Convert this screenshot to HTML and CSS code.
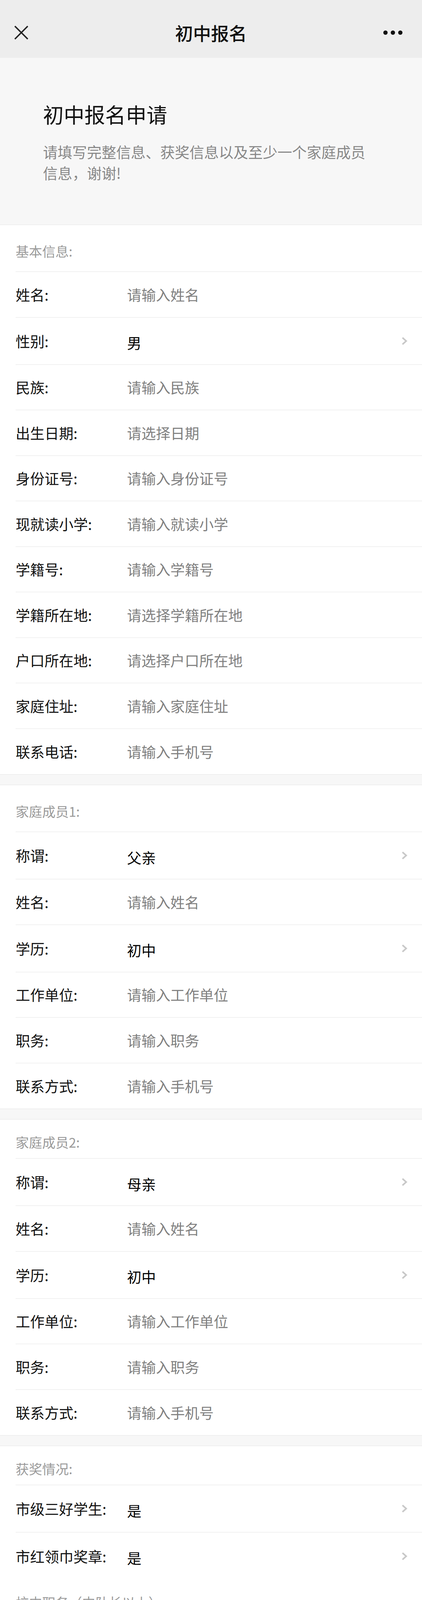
FILE: index.html
```html
<!DOCTYPE html>
<html lang="zh-CN">
<head>
<meta charset="utf-8">
<title>初中报名</title>
<link rel="stylesheet" href="styles.css">
</head>
<body>
<div class="page">
  <header class="nav">
    <span class="nav-close">
      <svg width="37" height="37" viewBox="0 0 37 37"><path d="M2 2L35 35M35 2L2 35" stroke="#222" stroke-width="3.6" fill="none"/></svg>
    </span>
    <h1 class="nav-title">初中报名</h1>
    <span class="nav-more"><i></i><i></i><i></i></span>
  </header>

  <section class="intro">
    <h2 class="intro-title">初中报名申请</h2>
    <p class="intro-desc">请填写完整信息、获奖信息以及至少一个家庭成员信息，谢谢!</p>
  </section>

  <section class="group">
    <div class="group-title first">基本信息:</div>
    <div class="cell"><span class="cell-label">姓名:</span><span class="cell-value ph">请输入姓名</span></div>
    <div class="cell pick"><span class="cell-label">性别:</span><span class="cell-value">男</span><svg class="chev" width="16" height="22" viewBox="0 0 16 22"><path d="M3 2.5L12.5 11L3 19.5" stroke="#c8c8c8" stroke-width="4" fill="none"/></svg></div>
    <div class="cell"><span class="cell-label">民族:</span><span class="cell-value ph">请输入民族</span></div>
    <div class="cell"><span class="cell-label">出生日期:</span><span class="cell-value ph">请选择日期</span></div>
    <div class="cell"><span class="cell-label">身份证号:</span><span class="cell-value ph">请输入身份证号</span></div>
    <div class="cell"><span class="cell-label">现就读小学:</span><span class="cell-value ph">请输入就读小学</span></div>
    <div class="cell"><span class="cell-label">学籍号:</span><span class="cell-value ph">请输入学籍号</span></div>
    <div class="cell"><span class="cell-label">学籍所在地:</span><span class="cell-value ph">请选择学籍所在地</span></div>
    <div class="cell"><span class="cell-label">户口所在地:</span><span class="cell-value ph">请选择户口所在地</span></div>
    <div class="cell"><span class="cell-label">家庭住址:</span><span class="cell-value ph">请输入家庭住址</span></div>
    <div class="cell last"><span class="cell-label">联系电话:</span><span class="cell-value ph">请输入手机号</span></div>
  </section>

  <div class="band"></div>

  <section class="group">
    <div class="group-title first">家庭成员1:</div>
    <div class="cell pick"><span class="cell-label">称谓:</span><span class="cell-value">父亲</span><svg class="chev" width="16" height="22" viewBox="0 0 16 22"><path d="M3 2.5L12.5 11L3 19.5" stroke="#c8c8c8" stroke-width="4" fill="none"/></svg></div>
    <div class="cell"><span class="cell-label">姓名:</span><span class="cell-value ph">请输入姓名</span></div>
    <div class="cell pick"><span class="cell-label">学历:</span><span class="cell-value">初中</span><svg class="chev" width="16" height="22" viewBox="0 0 16 22"><path d="M3 2.5L12.5 11L3 19.5" stroke="#c8c8c8" stroke-width="4" fill="none"/></svg></div>
    <div class="cell"><span class="cell-label">工作单位:</span><span class="cell-value ph">请输入工作单位</span></div>
    <div class="cell"><span class="cell-label">职务:</span><span class="cell-value ph">请输入职务</span></div>
    <div class="cell last"><span class="cell-label">联系方式:</span><span class="cell-value ph">请输入手机号</span></div>
  </section>

  <div class="band"></div>

  <section class="group">
    <div class="group-title">家庭成员2:</div>
    <div class="cell pick"><span class="cell-label">称谓:</span><span class="cell-value">母亲</span><svg class="chev" width="16" height="22" viewBox="0 0 16 22"><path d="M3 2.5L12.5 11L3 19.5" stroke="#c8c8c8" stroke-width="4" fill="none"/></svg></div>
    <div class="cell"><span class="cell-label">姓名:</span><span class="cell-value ph">请输入姓名</span></div>
    <div class="cell pick"><span class="cell-label">学历:</span><span class="cell-value">初中</span><svg class="chev" width="16" height="22" viewBox="0 0 16 22"><path d="M3 2.5L12.5 11L3 19.5" stroke="#c8c8c8" stroke-width="4" fill="none"/></svg></div>
    <div class="cell"><span class="cell-label">工作单位:</span><span class="cell-value ph">请输入工作单位</span></div>
    <div class="cell"><span class="cell-label">职务:</span><span class="cell-value ph">请输入职务</span></div>
    <div class="cell last"><span class="cell-label">联系方式:</span><span class="cell-value ph">请输入手机号</span></div>
  </section>

  <div class="band"></div>

  <section class="group">
    <div class="group-title">获奖情况:</div>
    <div class="cell pick"><span class="cell-label">市级三好学生:</span><span class="cell-value">是</span><svg class="chev" width="16" height="22" viewBox="0 0 16 22"><path d="M3 2.5L12.5 11L3 19.5" stroke="#c8c8c8" stroke-width="4" fill="none"/></svg></div>
    <div class="cell pick last"><span class="cell-label">市红领巾奖章:</span><span class="cell-value">是</span><svg class="chev" width="16" height="22" viewBox="0 0 16 22"><path d="M3 2.5L12.5 11L3 19.5" stroke="#c8c8c8" stroke-width="4" fill="none"/></svg></div>

    <div class="group-title">校内职务（中队长以上）:</div>
    <div class="cell"><span class="cell-label">四年级:</span><span class="cell-value ph">请输入四年级校内职务</span></div>
    <div class="cell"><span class="cell-label">五年级:</span><span class="cell-value ph">请输入五年级校内职务</span></div>
    <div class="cell last"><span class="cell-label">六年级:</span><span class="cell-value ph">请输入六年级校内职务</span></div>

    <div class="group-title">优秀证书(区级以上):</div>
    <div class="cell"><span class="cell-label">区级:</span><span class="cell-value ph">请输入区级优秀证书</span></div>
    <div class="cell"><span class="cell-label">市级:</span><span class="cell-value ph">请输入市级优秀证书</span></div>
    <div class="cell"><span class="cell-label">省级:</span><span class="cell-value ph">请输入省级优秀证书</span></div>
    <div class="cell last"><span class="cell-label">国家级:</span><span class="cell-value ph">请输入国家级优秀证书</span></div>

    <div class="area-title">杯赛证书</div>
    <div class="area">
      <div class="area-ph">请输入杯赛证书</div>
      <div class="area-count">0/200</div>
    </div>

    <div class="area-title">自我介绍</div>
    <div class="area second">
      <div class="area-ph">自我介绍...</div>
      <div class="area-count">0/200</div>
    </div>
  </section>

  <footer class="actions">
    <button class="btn btn-default" type="button">返回上一页</button>
    <button class="btn btn-primary" type="button">提交并保存</button>
  </footer>
</div>
</body>
</html>
```

FILE: styles.css
```css
* {
  box-sizing: border-box;
}

html, body {
  margin: 0;
  padding: 0;
  background: #ffffff;
}

body {
  font-family: "Noto Sans CJK SC", "Noto Sans", "Liberation Sans", sans-serif;
  color: #111111;
}

.page {
  width: 1080px;
}

/* ---------- navigation bar ---------- */
.nav {
  height: 148px;
  padding-top: 18px;
  background: #ededed;
  display: grid;
  grid-template-columns: 1fr auto 1fr;
  align-items: center;
}

.nav-close {
  display: flex;
  margin-left: 36px;
}

.nav-title {
  margin: 0;
  font-size: 46px;
  font-weight: 500;
  line-height: 60px;
  color: #111111;
}

.nav-more {
  justify-self: end;
  margin-right: 50px;
  display: flex;
  gap: 8px;
}

.nav-more i {
  display: block;
  width: 11px;
  height: 11px;
  border-radius: 50%;
  background: #111111;
}

/* ---------- intro ---------- */
.intro {
  height: 428px;
  padding: 109px 110px 0 110px;
  background: #f7f7f7;
  border-bottom: 1px solid #e5e5e5;
}

.intro-title {
  margin: 0;
  font-size: 53px;
  font-weight: 400;
  line-height: 70px;
  color: #111111;
}

.intro-desc {
  margin: 34px 0 0 0;
  width: 850px;
  font-size: 37.5px;
  line-height: 54px;
  color: #888888;
}

/* ---------- groups ---------- */
.group {
  background: #ffffff;
}

.group-title {
  margin-left: 40px;
  height: 100px;
  padding-top: 38px;
  font-size: 34px;
  line-height: 40px;
  color: #9a9a9a;
  border-bottom: 1px solid #e5e5e5;
}

.group-title.first {
  height: 120px;
  padding-top: 47px;
}

.cell {
  margin-left: 40px;
  height: 116.5px;
  padding-right: 37px;
  display: flex;
  align-items: center;
  border-bottom: 1px solid #e5e5e5;
  font-size: 37px;
  line-height: 50px;
}

.cell.pick {
  height: 121px;
}

.cell.last {
  border-bottom: none;
}

.cell-label {
  width: 285px;
  flex: none;
  color: #111111;
}

.cell-value {
  flex: 1;
  color: #000000;
}

.cell.pick .cell-value {
  padding-top: 9px;
}

.cell-value.ph {
  color: #808080;
}

.chev {
  flex: none;
  display: block;
}

.band {
  height: 28px;
  background: #f7f7f7;
  border-top: 1px solid #e5e5e5;
  border-bottom: 1px solid #e5e5e5;
}

/* ---------- text areas ---------- */
.area-title {
  height: 98px;
  padding: 37px 0 0 40px;
  font-size: 34px;
  line-height: 40px;
  color: #9a9a9a;
  border-bottom: 1px solid #e5e5e5;
}

.area {
  height: 325px;
  padding: 31px 44px 35px 42px;
  display: flex;
  flex-direction: column;
}

.area.second {
  height: 321px;
  padding-bottom: 31px;
}

.area-ph {
  font-size: 45px;
  line-height: 60px;
  color: #7f7f7f;
}

.area-count {
  margin-top: auto;
  text-align: right;
  font-size: 49px;
  line-height: 60px;
  color: #b2b2b2;
}

/* ---------- actions ---------- */
.actions {
  background: #f7f7f7;
  border-top: 1px solid #e5e5e5;
  padding: 44px 42px 0 42px;
  display: flex;
  flex-direction: column;
  gap: 41px;
}

.btn {
  display: block;
  width: 100%;
  margin: 0;
  border-radius: 12px;
  font-family: "Noto Sans CJK SC", "Noto Sans", sans-serif;
  font-size: 47px;
  line-height: 60px;
  cursor: pointer;
}

.btn-default {
  height: 124px;
  background: #f8f8f8;
  border: 1px solid #cacaca;
  color: #000000;
}

.btn-primary {
  height: 123px;
  background: #1aad19;
  border: 1px solid #179e16;
  color: #ffffff;
}
```
